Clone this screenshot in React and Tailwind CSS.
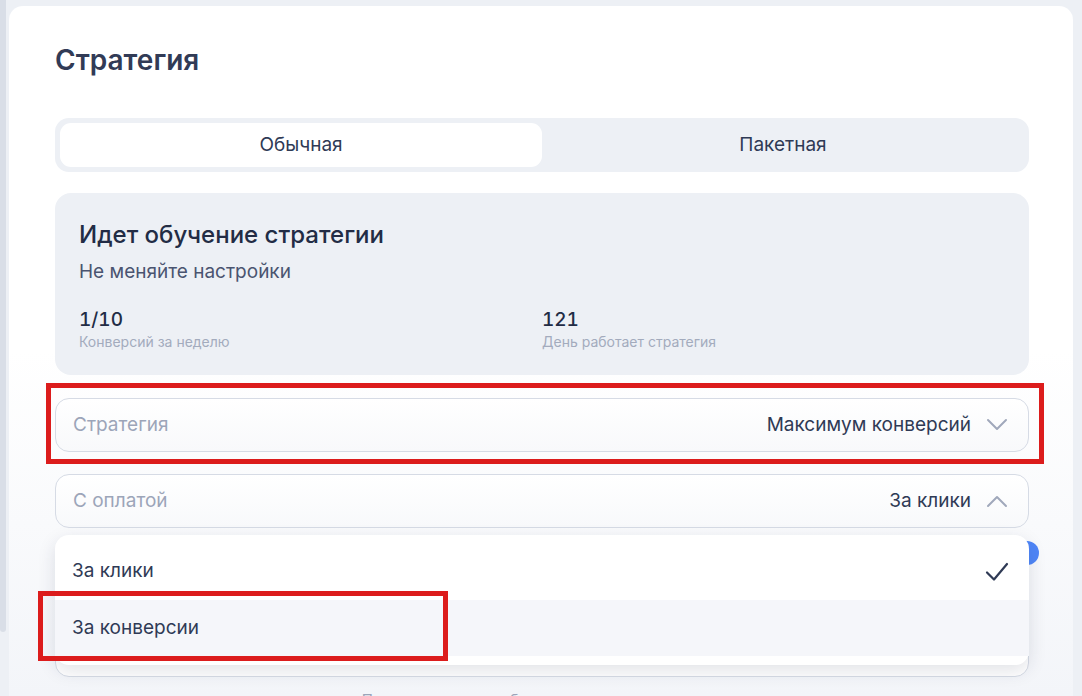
import React from 'react';

const font = { fontFamily: 'Inter, "Noto Sans", sans-serif' };

const Chevron = ({ up = false }) => (
  <svg width="22" height="14" viewBox="0 0 22 14" fill="none" className="shrink-0">
    <path
      d={up ? 'M2 12L11 3L20 12' : 'M2 2L11 11L20 2'}
      stroke="#a0a8bb"
      strokeWidth="2"
      strokeLinecap="round"
      strokeLinejoin="round"
    />
  </svg>
);

const Check = () => (
  <svg width="24" height="22" viewBox="0 0 24 22" fill="none">
    <path d="M2 11.5L9 18.5L22 3" stroke="#2f3a55" strokeWidth="2.2" strokeLinecap="round" strokeLinejoin="round" />
  </svg>
);

const SelectField = ({ label, value, up }) => (
  <div className="flex h-[54px] items-center justify-between rounded-[14px] border border-[#d6dbe5] bg-gradient-to-b from-white to-[#f8f9fb] pl-[17px] pr-[20px]">
    <span className="text-[19px] text-[#9ca5b9]">{label}</span>
    <div className="flex items-center gap-[15px]">
      <span className="text-[19px] text-[#2f3a55]">{value}</span>
      <Chevron up={up} />
    </div>
  </div>
);

export default function App() {
  return (
    <div className="flex h-[696px] w-[1082px] overflow-hidden bg-[#edf0f5]" style={font}>
      <div className="w-[6px] shrink-0">
        <div className="h-[632px] rounded-b-[3px] bg-[#d9dee7]" />
      </div>

      <div className="ml-[3px] mt-[6px] w-[1064px] shrink-0 rounded-t-[14px] bg-gradient-to-b from-white from-50% to-[#f3f5f9] pl-[46px] pr-[44px] pt-[36px]">
        <h1 className="text-[28px] font-semibold leading-[36px] text-[#313b56]">Стратегия</h1>

        <div className="mt-[40px] flex h-[54px] rounded-[14px] bg-[#edf0f5] p-[5px]">
          <div className="flex flex-1 items-center justify-center rounded-[11px] bg-white text-[19px] text-[#2f3a55]">
            Обычная
          </div>
          <div className="flex flex-1 items-center justify-center text-[19px] text-[#2f3a55]">Пакетная</div>
        </div>

        <div className="mt-[21px] h-[182px] rounded-[16px] bg-[#edf0f5] px-[24px] pt-[27px]">
          <div className="text-[24px] font-medium leading-[30px] text-[#222c45]">Идет обучение стратегии</div>
          <div className="mt-[10px] text-[19px] leading-[24px] text-[#4a5470]">Не меняйте настройки</div>
          <div className="mt-[24px] grid grid-cols-2">
            <div>
              <div className="text-[19px] font-medium leading-[24px] tabular-nums text-[#222c45]">1/10</div>
              <div className="mt-[1px] text-[14px] leading-[18px] text-[#a3abbd]">Конверсий за неделю</div>
            </div>
            <div>
              <div className="text-[19px] font-medium leading-[24px] tabular-nums text-[#222c45]">121</div>
              <div className="mt-[1px] text-[14px] leading-[18px] text-[#a3abbd]">День работает стратегия</div>
            </div>
          </div>
        </div>

        <div className="relative mt-[23px]">
          <SelectField label="Стратегия" value="Максимум конверсий" />
          <div className="pointer-events-none absolute -bottom-[12px] -left-[9px] -right-[15px] -top-[15px] z-20 border-[5px] border-[#dc1c1c]" />
        </div>

        <div className="relative mt-[22px]">
          <SelectField label="С оплатой" value="За клики" up />

          <div className="absolute left-0 right-0 top-[calc(100%+7px)] z-10 rounded-[14px] bg-white pb-[9px] pt-[8px] shadow-[0_6px_18px_rgba(30,40,70,0.13)]">
            <div className="flex h-[57px] items-center justify-between pl-[17px] pr-[20px]">
              <span className="text-[19px] text-[#2f3a55]">За клики</span>
              <Check />
            </div>
            <div className="relative flex h-[56px] items-center bg-[#f5f6fa] pl-[17px]">
              <span className="text-[19px] text-[#2f3a55]">За конверсии</span>
              <div className="pointer-events-none absolute -left-[17px] -top-[9px] h-[70px] w-[410px] border-[5px] border-[#dc1c1c]" />
            </div>
          </div>
        </div>

        <div className="mt-[13px] flex h-[24px] justify-end">
          <div className="-mr-[10px] h-[24px] w-[24px] rounded-full bg-[#4f86f7]" />
        </div>

        <div className="mt-[58px] h-[54px] rounded-[14px] border border-[#d6dbe5] bg-white" />

        <div className="mt-[13px] text-center text-[15px] leading-[20px] text-[#9ca5b9]">
          Почему стратегия обучается и что на это влияет
        </div>
      </div>
    </div>
  );
}
